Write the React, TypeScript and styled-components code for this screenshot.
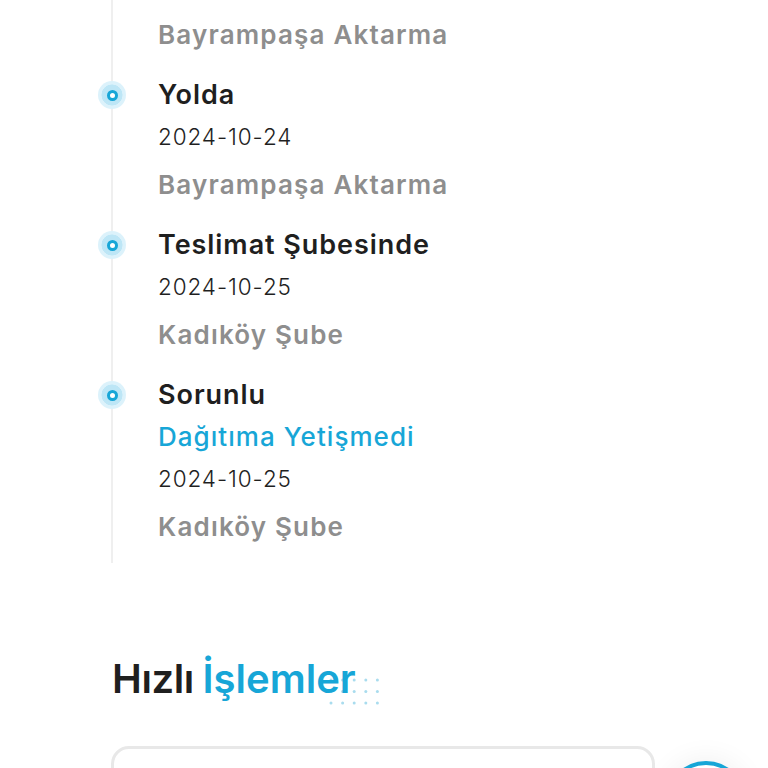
import styled, { createGlobalStyle } from "styled-components";

type StepType = {
  title?: string;
  note?: string;
  date?: string;
  place: string;
};

const GlobalStyle = createGlobalStyle`
  html, body {
    margin: 0;
    padding: 0;
    background: #ffffff;
  }

  body {
    font-family: Inter, "Noto Sans", "DejaVu Sans", sans-serif;
    color: #222222;
    overflow: hidden;
  }
`;

const Page = styled.div`
  width: 768px;
  height: 768px;
  overflow: hidden;
  display: flex;
  flex-direction: column;
`;

const Timeline = styled.div`
  position: relative;
  margin-left: 111px;
  padding: 8px 0 15px 47px;
  display: flex;
  flex-direction: column;
  gap: 18px;

  &::before {
    content: "";
    position: absolute;
    left: 0;
    top: 0;
    bottom: 0;
    width: 2px;
    background: #efefef;
  }
`;

const Step = styled.div`
  position: relative;
  display: flex;
  flex-direction: column;
`;

const Dot = styled.span`
  position: absolute;
  left: -60px;
  top: 7px;
  width: 28px;
  height: 28px;
  border-radius: 50%;
  background: radial-gradient(circle, #bde6f6 0 52%, #dcf2fb 54% 100%);
  display: flex;
  align-items: center;
  justify-content: center;

  &::after {
    content: "";
    width: 5px;
    height: 5px;
    border-radius: 50%;
    background: #ffffff;
    border: 3.5px solid #17a6d7;
  }
`;

const Line = styled.div`
  height: 42px;
  line-height: 42px;
  white-space: nowrap;
`;

const Title = styled(Line)`
  font-size: 27px;
  font-weight: 600;
  color: #1f1f1f;
  letter-spacing: 0.035em;
`;

const Note = styled(Line)`
  font-size: 26px;
  font-weight: 500;
  color: #17a6d7;
  letter-spacing: 0.04em;
`;

const DateText = styled(Line)`
  font-size: 22.5px;
  font-weight: 300;
  color: #1f1f1f;
  letter-spacing: 0.04em;
`;

const Place = styled(Line)`
  margin-top: 6px;
  font-size: 26px;
  font-weight: 600;
  color: #8e8e8e;
  letter-spacing: 0.045em;
`;

const Heading = styled.h2`
  position: relative;
  isolation: isolate;
  margin: 94px 0 0 112px;
  height: 44px;
  line-height: 44px;
  font-size: 40px;
  font-weight: 600;
  color: #1f1f1f;
  letter-spacing: -0.01em;
  word-spacing: -1px;

  span {
    color: #17a6d7;
    letter-spacing: 0;
    word-spacing: 0;
  }
`;

const Dots = styled.svg`
  position: absolute;
  left: 217px;
  top: 21px;
  z-index: -1;
`;

const ActionsRow = styled.div`
  margin: 45px 0 0 111px;
  display: flex;
  align-items: center;
  gap: 11px;
`;

const Card = styled.div`
  width: 544px;
  height: 110px;
  box-sizing: border-box;
  border: 3px solid #e8e8e8;
  border-radius: 18px;
  background: #ffffff;
`;

const RoundButton = styled.div`
  width: 80px;
  height: 80px;
  box-sizing: border-box;
  border-radius: 50%;
  border: 4px solid #17a6d7;
  background: #ffffff;
  box-shadow: 0 0 30px rgba(0, 0, 0, 0.07);
  flex-shrink: 0;
`;

const STEPS: StepType[] = [
  { place: "Bayrampaşa Aktarma" },
  { title: "Yolda", date: "2024-10-24", place: "Bayrampaşa Aktarma" },
  { title: "Teslimat Şubesinde", date: "2024-10-25", place: "Kadıköy Şube" },
  {
    title: "Sorunlu",
    note: "Dağıtıma Yetişmedi",
    date: "2024-10-25",
    place: "Kadıköy Şube"
  }
];

const DotPattern = () => (
  <Dots width="60" height="30" viewBox="0 0 60 30">
    {[0, 1, 2].map((row) =>
      [0, 1, 2, 3, 4].map((col) => (
        <circle
          key={`${row}-${col}`}
          cx={2 + col * 11.6}
          cy={2 + row * 11.5}
          r="1.5"
          fill="#a9dcee"
        />
      ))
    )}
  </Dots>
);

const App = () => {
  return (
    <Page>
      <GlobalStyle />
      <Timeline>
        {STEPS.map((step, index) => (
          <Step key={index}>
            {step.title && <Dot />}
            {step.title && <Title>{step.title}</Title>}
            {step.note && <Note>{step.note}</Note>}
            {step.date && <DateText>{step.date}</DateText>}
            <Place>{step.place}</Place>
          </Step>
        ))}
      </Timeline>

      <Heading>
        Hızlı <span>İşlemler</span>
        <DotPattern />
      </Heading>

      <ActionsRow>
        <Card />
        <RoundButton />
      </ActionsRow>
    </Page>
  );
};

export default App;
